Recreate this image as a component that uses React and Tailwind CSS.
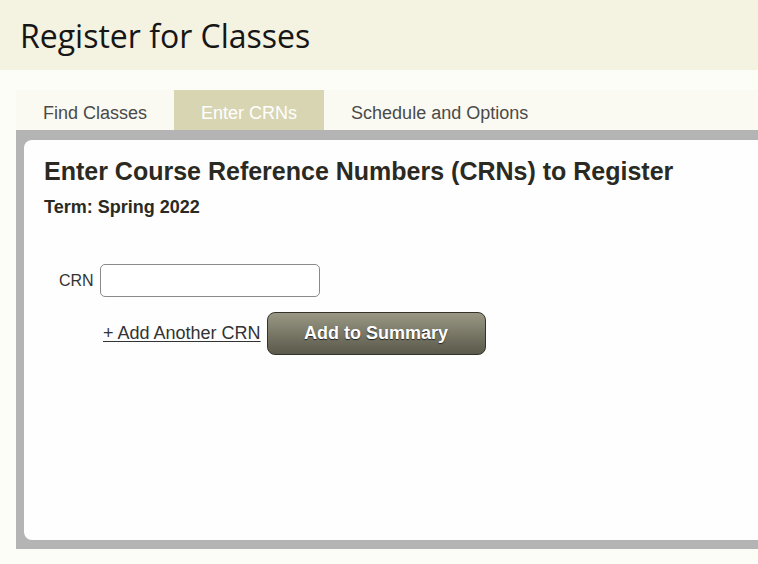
import React, { useState } from 'react';

const tabs = ['Find Classes', 'Enter CRNs', 'Schedule and Options'];

const App = () => {
  const [active, setActive] = useState('Enter CRNs');
  const [crn, setCrn] = useState('');

  return (
    <div className="min-h-[564px] bg-[#fdfdf7] font-['Liberation_Sans',Arial,sans-serif]">
      {/* Header */}
      <header className="h-[70px] bg-[#f4f2e1] pl-5 pt-[14px]">
        <h1 className="font-['Open_Sans',sans-serif] text-[32px] font-medium leading-[44px] text-[#161616]">
          Register for Classes
        </h1>
      </header>

      {/* Tabs */}
      <nav className="ml-4 mt-5 flex h-10 bg-[#fafaf2]">
        {tabs.map((tab) => (
          <button
            key={tab}
            onClick={() => setActive(tab)}
            className={
              tab === active
                ? 'h-10 bg-[#d8d5b3] px-[27px] pt-[6px] text-[18px] text-white'
                : 'h-10 px-[27px] pt-[6px] text-[18px] text-[#4a4a4a]'
            }
          >
            {tab}
          </button>
        ))}
      </nav>

      {/* Panel */}
      <div className="ml-4 bg-[#b4b4b4] pb-[9px] pl-2 pt-[10px]">
        <div className="h-[400px] rounded-l-lg bg-[#fefefe] pl-5 pt-[17px]">
          <h2 className="text-[25px] font-bold leading-7 text-[#2a2a22]">
            Enter Course Reference Numbers (CRNs) to Register
          </h2>
          <p className="mt-[10px] text-[18px] font-bold leading-6 text-[#2a2a22]">Term: Spring 2022</p>

          <div className="mt-[45px] flex items-center pl-[15px]">
            <label htmlFor="crn" className="text-[16px] text-[#333]">
              CRN
            </label>
            <input
              id="crn"
              value={crn}
              onChange={(e) => setCrn(e.target.value)}
              className="ml-[6px] h-[33px] w-[220px] rounded-[5px] border border-[#8a8a8a] bg-white px-2 text-[16px] outline-none"
            />
          </div>

          <div className="mt-[15px] flex items-center pl-[59px]">
            <a href="#" className="text-[18px] text-[#333] underline underline-offset-2">
              + Add Another CRN
            </a>
            <button className="ml-[6px] h-[43px] w-[219px] rounded-lg border border-[#33332a] bg-gradient-to-b from-[#9a9884] to-[#5a594b] text-[18px] font-bold text-white [text-shadow:0_1px_1px_#222]">
              Add to Summary
            </button>
          </div>
        </div>
      </div>
    </div>
  );
};

export default App;
